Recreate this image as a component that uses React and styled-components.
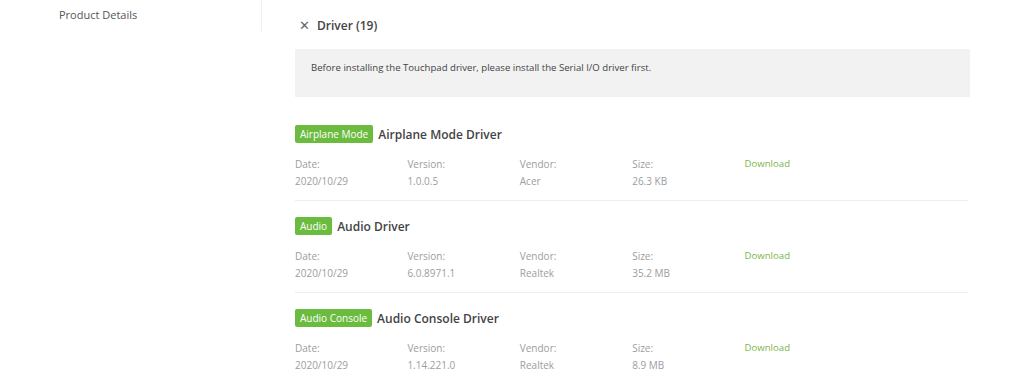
import React from "react";
import styled, { createGlobalStyle } from "styled-components";

const Global = createGlobalStyle`
  html, body { margin: 0; padding: 0; background: #fff; }
  body { font-family: "Open Sans", "Noto Sans", sans-serif; color: #333; }
`;

const Page = styled.div`
  display: flex;
  align-items: flex-start;
  width: 1024px;
  height: 376px;
  overflow: hidden;
`;

const Sidebar = styled.nav`
  width: 262px;
  height: 31px;
  border-right: 1px solid #efefef;
  box-sizing: border-box;
  padding: 7px 0 0 59px;
`;

const NavItem = styled.div`
  font-size: 11px;
  line-height: 16px;
  color: #555;
`;

const Main = styled.main`
  margin-left: 33px;
  width: 675px;
  padding-top: 14px;
`;

const Header = styled.div`
  display: flex;
  align-items: center;
  gap: 7px;
  height: 22px;
  padding-left: 4px;
`;

const Close = styled.span`
  font-size: 13px;
  font-weight: 300;
  color: #666;
  line-height: 1;
`;

const Heading = styled.h2`
  margin: 0;
  font-size: 12px;
  font-weight: 600;
  color: #444;
`;

const Note = styled.div`
  margin-top: 13px;
  background: #f2f2f2;
  height: 48px;
  box-sizing: border-box;
  padding: 12px 16px;
  font-size: 9.6px;
  line-height: 14px;
  color: #444;
`;

const List = styled.div`
  margin-top: 28px;
`;

const Item = styled.div`
  height: ${p => (p.$last ? "auto" : "75px")};
  border-bottom: ${p => (p.$last ? "none" : "1px solid #eeeeee")};
  width: 673px;
  margin-bottom: 16px;
`;

const TitleRow = styled.div`
  display: flex;
  align-items: center;
  gap: 5px;
  height: 18px;
`;

const Badge = styled.span`
  background: #6bbb3f;
  color: #fff;
  font-size: 10px;
  line-height: 18px;
  height: 18px;
  padding: 0 5px;
  border-radius: 2px;
`;

const Title = styled.span`
  font-size: 12px;
  font-weight: 600;
  color: #444;
`;

const Meta = styled.div`
  display: grid;
  grid-template-columns: repeat(5, 112.4px);
  margin-top: 14px;
`;

const Cell = styled.div`
  display: flex;
  flex-direction: column;
  gap: 3px;
  font-size: 10px;
  line-height: 14px;
  color: #9d9d9d;
`;

const Download = styled.a`
  font-size: 9.6px;
  line-height: 14px;
  color: #7ab648;
  text-decoration: none;
  font-weight: 400;
`;

const drivers = [
  { tag: "Airplane Mode", name: "Airplane Mode Driver", date: "2020/10/29", version: "1.0.0.5", vendor: "Acer", size: "26.3 KB" },
  { tag: "Audio", name: "Audio Driver", date: "2020/10/29", version: "6.0.8971.1", vendor: "Realtek", size: "35.2 MB" },
  { tag: "Audio Console", name: "Audio Console Driver", date: "2020/10/29", version: "1.14.221.0", vendor: "Realtek", size: "8.9 MB" },
];

export default function App() {
  return (
    <>
      <Global />
      <Page>
        <Sidebar>
          <NavItem>Product Details</NavItem>
        </Sidebar>
        <Main>
          <Header>
            <Close>✕</Close>
            <Heading>Driver (19)</Heading>
          </Header>
          <Note>Before installing the Touchpad driver, please install the Serial I/O driver first.</Note>
          <List>
            {drivers.map((d, i) => (
              <Item key={d.name} $last={i === drivers.length - 1}>
                <TitleRow>
                  <Badge>{d.tag}</Badge>
                  <Title>{d.name}</Title>
                </TitleRow>
                <Meta>
                  <Cell><span>Date:</span><span>{d.date}</span></Cell>
                  <Cell><span>Version:</span><span>{d.version}</span></Cell>
                  <Cell><span>Vendor:</span><span>{d.vendor}</span></Cell>
                  <Cell><span>Size:</span><span>{d.size}</span></Cell>
                  <Cell><Download href="#">Download</Download></Cell>
                </Meta>
              </Item>
            ))}
          </List>
        </Main>
      </Page>
    </>
  );
}
